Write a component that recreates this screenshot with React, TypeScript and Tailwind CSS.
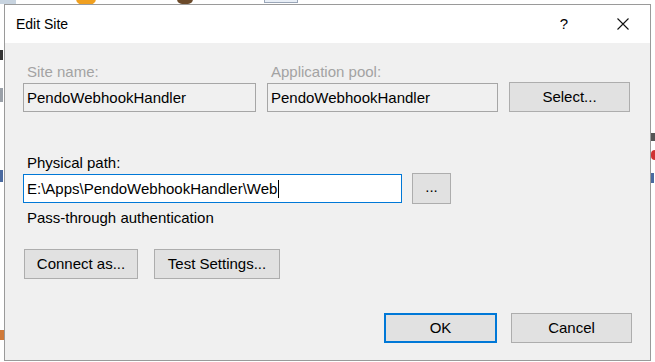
function Button({ label, width, primary }: { label: string; width: string; primary?: boolean }) {
  return (
    <button
      className={`flex h-[30px] items-center justify-center bg-[#e1e1e1] ${width} ${
        primary ? 'border-2 border-[#0078d7]' : 'border border-[#adadad]'
      }`}
    >
      {label}
    </button>
  )
}

function TextBox({ value, width, active }: { value: string; width: string; active?: boolean }) {
  return (
    <div
      className={`flex h-[29px] items-center border pl-[3px] ${width} ${
        active ? 'border-[#0078d7] bg-white' : 'border-[#a6a6a6] bg-[#f0f0f0]'
      }`}
    >
      <span>{value}</span>
      {active && <span className="ml-[1px] h-[18px] w-px bg-black" />}
    </div>
  )
}

export default function App() {
  return (
    <div className="relative h-[362px] w-[655px] overflow-hidden bg-white font-['Liberation_Sans',Arial,sans-serif] text-[15px] leading-[20px] text-black">
      {/* desktop behind the dialog */}
      <div className="absolute left-[76px] top-[-8px] h-[13px] w-[20px] rounded-full bg-[#f0a020]" />
      <div className="absolute left-[177px] top-[-6px] h-[10px] w-[16px] rounded-full bg-[#6b4a2a]" />
      <div className="absolute left-[264px] top-[-2px] h-[5px] w-[34px] border border-[#9aa6b8] bg-[#e8eef6]" />
      <div className="absolute left-0 top-0 h-[4px] w-[16px] bg-[#c8d4e0]" />
      <div className="absolute left-0 top-[50px] h-[10px] w-[3px] bg-[#333]" />
      <div className="absolute left-0 top-[88px] h-[14px] w-[3px] bg-[#9aa0a8]" />
      <div className="absolute left-0 top-[170px] h-[12px] w-[3px] bg-[#4a6aa0]" />
      <div className="absolute left-0 top-[330px] h-[10px] w-[4px] bg-[#d07a3a]" />
      <div className="absolute left-[651px] top-[133px] h-[8px] w-[4px] bg-[#555]" />
      <div className="absolute left-[651px] top-[150px] h-[10px] w-[4px] rounded-l-full bg-[#d03030]" />
      <div className="absolute left-[651px] top-[173px] h-[10px] w-[3px] bg-[#4a6aa0]" />

      {/* dialog window */}
      <div className="absolute left-[4px] top-[4px] flex h-[357px] w-[647px] flex-col border border-[#9a9a9a] bg-[#f0f0f0]">
        <div className="flex h-[38px] items-center bg-white pl-[11px] pr-[21px]">
          <span className="text-[14px]">Edit Site</span>
          <span className="ml-auto text-[15px]">?</span>
          <svg width="12" height="12" viewBox="0 0 12 12" className="ml-[49px]">
            <path d="M0.5 0.5 L11.5 11.5 M11.5 0.5 L0.5 11.5" stroke="#111" strokeWidth="1.1" fill="none" />
          </svg>
        </div>

        <div className="flex flex-1 flex-col px-[18px]">
          <div className="mt-[19px] flex items-end gap-[11px]">
            <div className="flex flex-col">
              <span className="pl-[4px] text-[#a3a3a3]">Site name:</span>
              <div className="mt-[1px]">
                <TextBox value="PendoWebhookHandler" width="w-[233px]" />
              </div>
            </div>
            <div className="flex flex-col">
              <span className="pl-[4px] text-[#a3a3a3]">Application pool:</span>
              <div className="mt-[1px]">
                <TextBox value="PendoWebhookHandler" width="w-[231px]" />
              </div>
            </div>
            <Button label="Select..." width="w-[121px]" />
          </div>

          <span className="mt-[41px] pl-[4px]">Physical path:</span>
          <div className="flex h-[31px] items-center gap-[10px]">
            <TextBox value="E:\Apps\PendoWebhookHandler\Web" width="w-[379px]" active />
            <button className="flex h-[31px] w-[39px] items-center justify-center border border-[#adadad] bg-[#e1e1e1] pb-[4px]">
              ...
            </button>
          </div>
          <span className="mt-[4px] pl-[4px]">Pass-through authentication</span>

          <div className="ml-[1px] mt-[21px] flex gap-[16px]">
            <Button label="Connect as..." width="w-[114px]" />
            <Button label="Test Settings..." width="w-[126px]" />
          </div>

          <div className="mt-[34px] flex justify-end gap-[14px]">
            <Button label="OK" width="w-[113px]" primary />
            <Button label="Cancel" width="w-[121px]" />
          </div>
        </div>
      </div>
    </div>
  )
}
